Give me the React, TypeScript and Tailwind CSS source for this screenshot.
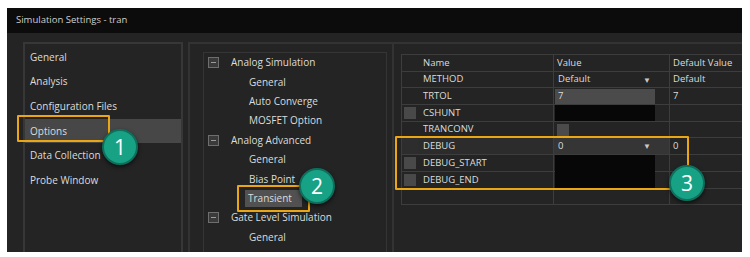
import React from "react";

const font = { fontFamily: '"Open Sans", "Noto Sans", sans-serif' };

function MinusBox() {
  return (
    <div className="w-[11px] h-[11px] border border-[#6e6e6e] bg-[#3a3a3a] flex items-center justify-center mr-[12px] ml-[4px]">
      <div className="w-[5px] h-px bg-[#9a9a9a]" />
    </div>
  );
}

function Badge({ n }: { n: string }) {
  return (
    <div className="w-[36px] h-[36px] rounded-full bg-[#17a286] border-2 border-[#0f6f5d] shadow-[0_2px_4px_rgba(0,0,0,0.6)] flex items-center justify-center text-white text-[21px] leading-none">
      {n}
    </div>
  );
}

function Arrow() {
  return <span className="text-[#c8c8c8] text-[8px] leading-none">▼</span>;
}

type Row = {
  name: string;
  check?: boolean;
  value: React.ReactNode;
  def: string;
  highlight?: boolean;
};

export default function App() {
  const leftItems = ["General", "Analysis", "Configuration Files", "Options", "Data Collection", "Probe Window"];

  const tree: { label: string; group?: boolean; selected?: boolean }[] = [
    { label: "Analog Simulation", group: true },
    { label: "General" },
    { label: "Auto Converge" },
    { label: "MOSFET Option" },
    { label: "Analog Advanced", group: true },
    { label: "General" },
    { label: "Bias Point" },
    { label: "Transient", selected: true },
    { label: "Gate Level Simulation", group: true },
    { label: "General" },
  ];

  const rowH = "h-[16.7px]";

  return (
    <div className="w-[750px] h-[257px] bg-white overflow-hidden" style={font}>
      <div className="relative ml-[7px] mt-[8px] w-[735px] h-[244px] bg-[#232423] overflow-hidden text-[#dcdcdc]">
        {/* title bar */}
        <div className="h-[25px] bg-[#0c0c0c] flex items-center pl-[9px] text-[9.5px] text-[#cfcfcf]">
          Simulation Settings - tran
        </div>
        {/* body */}
        <div className="flex pt-[9px] pl-[16px] h-[219px]">
          {/* left panel */}
          <div className="w-[160px] h-[230px] border-2 border-[#363736] pt-[1px] shrink-0">
            {leftItems.map((it) => (
              <div
                key={it}
                className={`h-[24.6px] flex items-center pl-[5px] text-[10px] ${it === "Options" ? "bg-[#464746]" : ""}`}
              >
                {it}
              </div>
            ))}
          </div>
          {/* middle panel */}
          <div className="ml-[5px] w-[206px] h-[230px] border-2 border-[#323332] pt-[8px] pl-[13px] pr-[5px] shrink-0">
            <div className="h-[220px] border border-[#343534] pl-[0px]">
              {tree.map((t, i) => (
                <div key={i} className="h-[19.4px] flex items-center text-[10px]">
                  {t.group ? (
                    <>
                      <MinusBox />
                      <span>{t.label}</span>
                    </>
                  ) : (
                    <span
                      className={`ml-[45px] ${t.selected ? "bg-[#505150] pl-[3px] pr-[10px] py-[1px] -ml-[0px]" : ""}`}
                      style={t.selected ? { marginLeft: 41 } : undefined}
                    >
                      {t.label}
                    </span>
                  )}
                </div>
              ))}
            </div>
          </div>
          {/* right panel */}
          <div className="w-[360px] h-[230px] border-t-2 border-[#323332] pt-[10px] pl-[7px] shrink-0">
            <div className="border-l border-t border-[#3c3d3c] w-[360px]">
              {(
                [
                  { name: "Name", value: "Value", def: "Default Value", header: true },
                  {
                    name: "METHOD",
                    value: (
                      <div className="flex items-center justify-between w-[100px] pl-[3px] pr-[4px]">
                        <span>Default</span>
                        <Arrow />
                      </div>
                    ),
                    def: "Default",
                  },
                  {
                    name: "TRTOL",
                    value: (
                      <div className="w-[100px] h-[15px] bg-[#4a4b4a] pl-[3px] flex items-center">7</div>
                    ),
                    def: "7",
                  },
                  {
                    name: "CSHUNT",
                    check: true,
                    value: <div className="w-[100px] h-[16px] bg-[#070707]" />,
                    def: "",
                  },
                  {
                    name: "TRANCONV",
                    value: <div className="ml-[2px] w-[12px] h-[12px] bg-[#4a4b4a]" />,
                    def: "",
                  },
                  {
                    name: "DEBUG",
                    highlight: true,
                    value: (
                      <div className="flex items-center justify-between w-[100px] pl-[3px] pr-[4px]">
                        <span>0</span>
                        <Arrow />
                      </div>
                    ),
                    def: "0",
                  },
                  {
                    name: "DEBUG_START",
                    check: true,
                    value: <div className="w-[100px] h-[17.7px] bg-[#070707] mt-[1px]" />,
                    def: "",
                  },
                  {
                    name: "DEBUG_END",
                    check: true,
                    value: <div className="w-[100px] h-[17.7px] bg-[#070707] -mt-[1px]" />,
                    def: "",
                  },
                  { name: "", value: "", def: "" },
                ] as (Row & { header?: boolean })[]
              ).map((r, i) => (
                <div key={i} className={`${rowH} flex border-b border-[#3c3d3c] text-[9.5px]`}>
                  <div
                    className={`w-[16px] shrink-0 flex items-center justify-center ${r.highlight ? "bg-[#2c2d2c]" : ""}`}
                  >
                    {r.check && <div className="w-[12px] h-[12px] bg-[#484948]" />}
                  </div>
                  <div
                    className={`w-[136px] shrink-0 flex items-center pl-[5px] border-r border-[#3c3d3c] ${r.highlight ? "bg-[#2b2c2b]" : ""}`}
                  >
                    {r.name}
                  </div>
                  <div
                    className={`w-[116px] shrink-0 flex items-center pl-[1px] border-r border-[#3c3d3c] ${r.highlight ? "bg-[#343534]" : ""}`}
                  >
                    {typeof r.value === "string" ? <span className="pl-[2px]">{r.value}</span> : r.value}
                  </div>
                  <div className="flex-1 flex items-center pl-[3px]">{r.def}</div>
                </div>
              ))}
            </div>
          </div>
        </div>

        {/* overlays: highlight boxes */}
        <div className="absolute left-[10px] top-[107px] w-[93px] h-[27px] border-2 border-[#eaa614] rounded-[1px]" />
        <div className="absolute left-[230px] top-[177px] w-[73px] h-[27px] border-2 border-[#eaa614] rounded-[1px]" />
        <div className="absolute left-[388px] top-[128px] w-[294px] h-[54px] border-2 border-[#eaa614] rounded-[1px]" />

        {/* badges */}
        <div className="absolute left-[95px] top-[121px]">
          <Badge n="1" />
        </div>
        <div className="absolute left-[292px] top-[160px]">
          <Badge n="2" />
        </div>
        <div className="absolute left-[662px] top-[157px]">
          <Badge n="3" />
        </div>
      </div>
    </div>
  );
}
